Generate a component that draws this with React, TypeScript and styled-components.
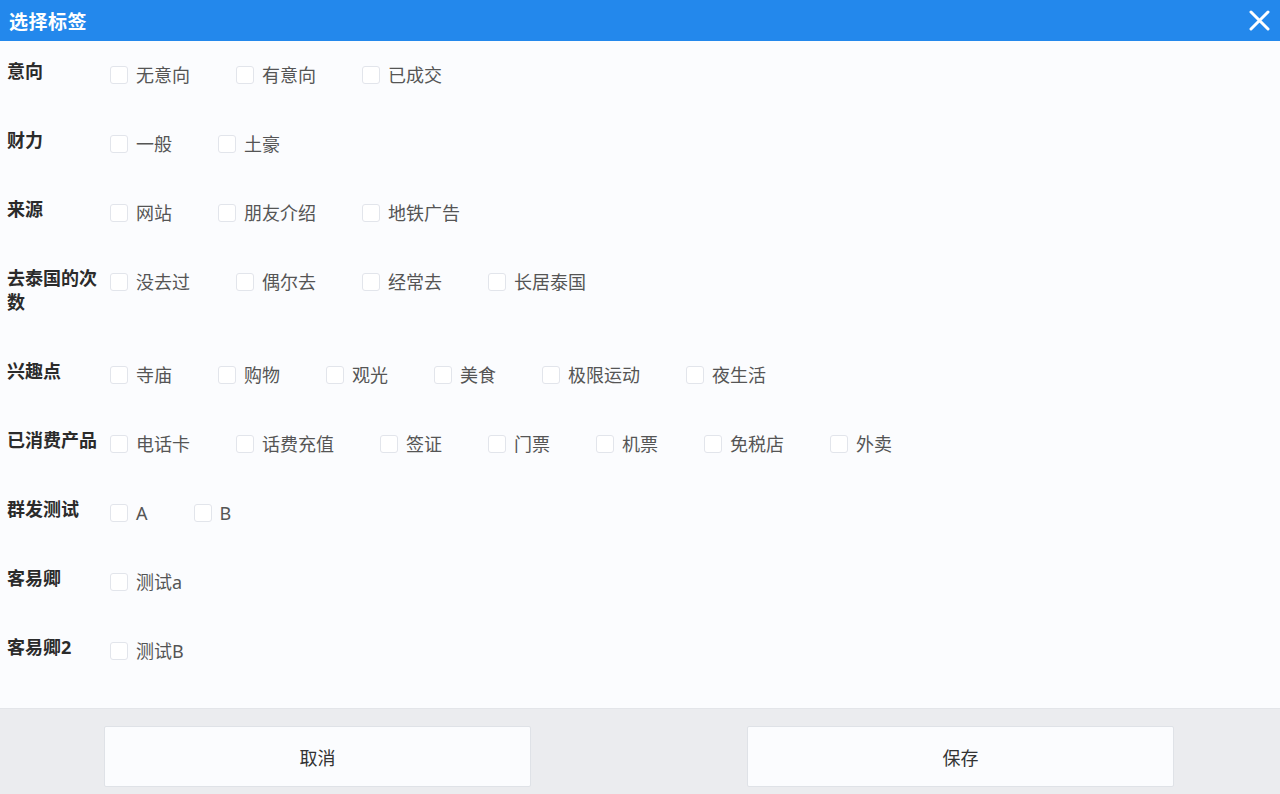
import React from "react";
import styled, { createGlobalStyle } from "styled-components";

const Global = createGlobalStyle`
  html, body { margin: 0; padding: 0; background: #fbfcfe; }
  body { font-family: "Noto Sans", "Noto Sans CJK SC", sans-serif; }
  * { box-sizing: border-box; }
`;

const Dialog = styled.div`
  width: 1280px;
  height: 794px;
  display: flex;
  flex-direction: column;
  background: #fbfcfe;
  overflow: hidden;
`;

const Header = styled.div`
  height: 41px;
  flex: none;
  background: #2388ec;
  display: flex;
  align-items: center;
  justify-content: space-between;
  padding: 0 10px 0 9px;
`;

const Title = styled.div`
  color: #ffffff;
  font-size: 19px;
  font-weight: 700;
  letter-spacing: 0.5px;
`;

const Close = styled.button`
  border: none;
  background: transparent;
  padding: 0;
  width: 22px;
  height: 22px;
  display: flex;
  align-items: center;
  justify-content: center;
  cursor: pointer;
`;

const Body = styled.div`
  flex: 1;
  min-height: 0;
  padding: 18px 0 0 7px;
`;

const Row = styled.div`
  display: flex;
  align-items: flex-start;
  margin-bottom: 41px;
`;

const Label = styled.div`
  width: 96px;
  margin-right: 7px;
  padding-bottom: 4px;
  font-size: 18px;
  line-height: 24px;
  font-weight: 700;
  color: #2b2b2b;
  word-break: break-all;
`;

const Options = styled.div`
  display: flex;
  align-items: center;
  padding-top: 4px;
`;

const Option = styled.label`
  display: flex;
  align-items: center;
  margin-right: 46px;
  font-size: 18px;
  line-height: 24px;
  color: #555;
  cursor: pointer;
`;

const Box = styled.span`
  width: 18px;
  height: 18px;
  border: 1px solid #e2e5eb;
  border-radius: 3px;
  background: #fff;
  margin-right: 8px;
  flex: none;
`;

const Footer = styled.div`
  height: 86px;
  flex: none;
  background: #ebecef;
  border-top: 1px solid #e3e5e9;
  display: flex;
  align-items: flex-start;
  padding: 17px 106px 0 104px;
  gap: 216px;
`;

const Button = styled.button`
  width: 427px;
  height: 61px;
  background: #fbfcfe;
  border: 1px solid #dfe2e7;
  border-radius: 2px;
  font-family: "Noto Sans CJK SC", sans-serif;
  font-size: 18px;
  color: #333;
  cursor: pointer;
`;

const groups: { label: string; options: string[] }[] = [
  { label: "意向", options: ["无意向", "有意向", "已成交"] },
  { label: "财力", options: ["一般", "土豪"] },
  { label: "来源", options: ["网站", "朋友介绍", "地铁广告"] },
  { label: "去泰国的次数", options: ["没去过", "偶尔去", "经常去", "长居泰国"] },
  { label: "兴趣点", options: ["寺庙", "购物", "观光", "美食", "极限运动", "夜生活"] },
  { label: "已消费产品", options: ["电话卡", "话费充值", "签证", "门票", "机票", "免税店", "外卖"] },
  { label: "群发测试", options: ["A", "B"] },
  { label: "客易卿", options: ["测试a"] },
  { label: "客易卿2", options: ["测试B"] },
];

export default function App() {
  return (
    <>
      <Global />
      <Dialog>
        <Header>
          <Title>选择标签</Title>
          <Close aria-label="close">
            <svg width="21" height="21" viewBox="0 0 21 21">
              <path d="M2 2 L19 19 M19 2 L2 19" stroke="#fff" strokeWidth="3" strokeLinecap="round" />
            </svg>
          </Close>
        </Header>
        <Body>
          {groups.map((g) => (
            <Row key={g.label}>
              <Label>{g.label}</Label>
              <Options>
                {g.options.map((o) => (
                  <Option key={o}>
                    <Box />
                    {o}
                  </Option>
                ))}
              </Options>
            </Row>
          ))}
        </Body>
        <Footer>
          <Button>取消</Button>
          <Button>保存</Button>
        </Footer>
      </Dialog>
    </>
  );
}
